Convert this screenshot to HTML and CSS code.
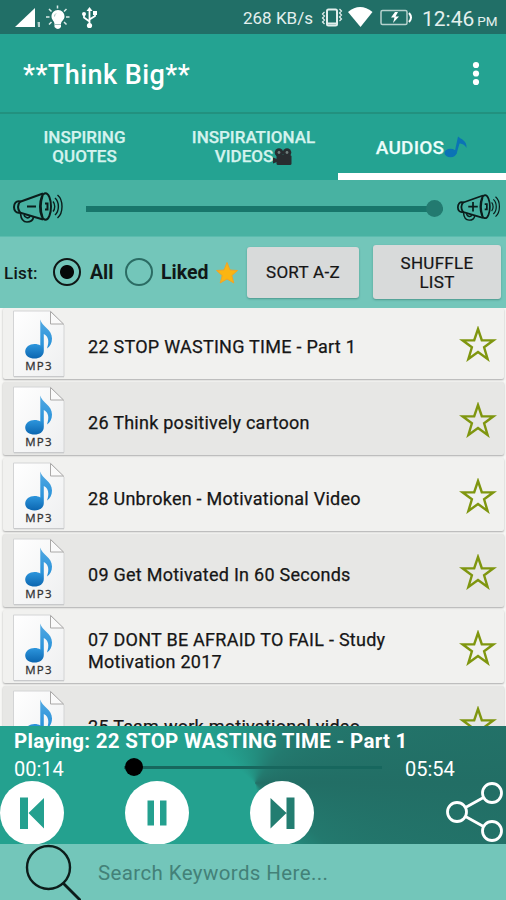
FILE: index.html
```html
<!DOCTYPE html>
<html lang="en">
<head>
<meta charset="utf-8">
<title>Think Big</title>
<link rel="stylesheet" href="styles.css">
</head>
<body>
<svg class="defs" aria-hidden="true">
  <defs>
    <linearGradient id="paper" x1="0" y1="0" x2="1" y2="1"><stop offset="0" stop-color="#fff"/><stop offset="1" stop-color="#eeeff0"/></linearGradient>
    <linearGradient id="blue" x1="0" y1="0" x2="0" y2="1"><stop offset="0" stop-color="#52a9e2"/><stop offset=".65" stop-color="#2b93da"/><stop offset="1" stop-color="#0c66b0"/></linearGradient>
  </defs>
  <symbol id="mp3" viewBox="0 0 54 68">
    <path d="M1.5 1H38.500L52 15V66.500H1.500Z" fill="url(#paper)" stroke="#d3d4d5"/>
    <path d="M2 66.800H52" stroke="#c4c5c6"/>
    <path d="M38.500 1.500V14H51.500Z" fill="#fafafa" stroke="#aaa9a8"/>
    <path d="M28.300 9.500C30 17 40 19 40 28.500C40 33 38 36.500 35 38.500C37.500 31 36.500 26.500 31.800 24V41C31.800 46 27.500 48.500 22.500 48.500C17.500 48.500 13.200 46 13.200 41.500C13.200 37 17.500 34 22.500 34C25 34 27 34.500 28.300 35.500Z" fill="url(#blue)"/>
  </symbol>
  <symbol id="star" viewBox="0 0 38 36">
    <path d="M19 3L22.800 14.200L34.500 14.300L25.100 21.300L28.600 33L19 26L9.400 33L12.900 21.300L3.500 14.300L15.200 14.200Z" fill="none" stroke="#7f960f" stroke-width="2.400"/>
  </symbol>
  <symbol id="horn" viewBox="0 0 52 34">
    <g fill="none" stroke="#0b1d1b" stroke-width="2">
      <path d="M6.500 11L30 2.500M6.500 21.500L30 28.500"/>
      <path d="M7 10.500C3 9.500 1 12.500 1 16S3 22.500 7 21.500C4.500 18 4.500 14 7 10.500Z"/>
      <ellipse cx="32.500" cy="15.500" rx="5.500" ry="13.300"/>
      <path d="M29.500 5C27.500 11 27.500 20 29.500 26M32 12.500H34.500V18.500H32"/>
      <path d="M7.500 22.500C8 28 10.500 31 14 31S20 29 20.500 26M11 24C12 27 16 28 17 25" stroke-width="1.700"/>
      <path d="M40 10.500C42.300 13 42.300 18 40 20.500M42 7C46.500 11 46.500 20 42 24M44.500 4C50.500 9 50.500 22 44.500 27" stroke-width="1.400"/>
    </g>
  </symbol>
</svg>
<div class="screen">
  <header class="status">
    <svg class="status-left" viewBox="0 0 100 34">
      <path d="M15 27L35 8V27Z" fill="#fff"/><path d="M37.500 22H40V27H38" fill="#b5d2ce"/>
      <g stroke="#dcebe9" stroke-width="1.500"><path d="M57.500 5.500V8.500M49 9L51.500 11.500M66.500 9L64 11.500M46 17H49.500M66 17H69.500M49 24.500L51.500 22M66.500 24.500L64 22"/></g>
      <path d="M58 10C54 10 51.500 13 51.500 16.500C51.500 20 54.500 21 54.500 24V27Q58 31 61 27V24C61 21 64.500 20 64.500 16.500C64.500 13 62 10 58 10Z" fill="#fff"/>
      <path d="M56 13.500Q54.500 14.500 54.500 16.500M55 24.500H61" stroke="#9fbfbb" fill="none"/>
      <g fill="none" stroke="#fff" stroke-width="1.800"><path d="M89.500 9V25M84 14V17.500L89.500 21.500M95 13V16L89.500 19.500"/></g>
      <path d="M86.500 11L89.500 7L92.500 11Z" fill="#fff"/><circle cx="89.500" cy="25.500" r="2.600" fill="#fff"/><circle cx="84" cy="14" r="2" fill="#fff"/><path d="M93 11H97V15H93Z" fill="#fff"/>
    </svg>
    <span class="speed">268 KB/s</span>
    <svg class="status-right" viewBox="320 0 94 34">
      <g fill="none" stroke="#e3efed"><rect x="327" y="9.500" width="10" height="16" rx="1.500" stroke-width="2"/><path d="M327 23.500H337" stroke-width="2"/><path d="M324.500 12L322.500 14L324.500 16L322.500 18L324.500 20L322.500 22L324.500 24M339.500 9L341.500 11L339.500 13L341.500 15L339.500 17L341.500 19L339.500 21" stroke-width="1.200"/></g>
      <path d="M348 12Q360 2 372.500 12L360.500 27Z" fill="#fff"/>
      <rect x="381" y="10.500" width="26" height="14" rx="1.500" fill="none" stroke="#b6d2ce" stroke-width="1.500"/><path d="M409 13Q413 17.500 409 22" fill="none" stroke="#fff" stroke-width="2"/>
      <path d="M395 12L391 17.500H394.500L393 23L399 16.500H395.500L398 12Z" fill="#fff"/>
    </svg>
    <span class="clock">12:46<small>PM</small></span>
  </header>
  <div class="appbar">
    <h1>**Think Big**</h1>
    <svg class="more" viewBox="0 0 8 26"><g fill="#fff"><circle cx="4" cy="4" r="3.100"/><circle cx="4" cy="12.500" r="3.100"/><circle cx="4" cy="21" r="3.100"/></g></svg>
  </div>
  <nav class="tabs">
    <div class="tab"><span>INSPIRING<br>QUOTES</span></div>
    <div class="tab"><span>INSPIRATIONAL<br><i class="line">VIDEOS<svg class="camera" viewBox="0 0 19 18"><g fill="#282d30"><circle cx="6" cy="4.500" r="4.300"/><circle cx="14" cy="4.500" r="4.300"/><rect x="3.500" y="7" width="15" height="10" rx="1.500"/><path d="M0 9.500L4 11V14L0 15.500Z"/></g><g fill="#71807e"><circle cx="6" cy="4.500" r="1.400"/><circle cx="14" cy="4.500" r="1.400"/></g></svg></i></span></div>
    <div class="tab active"><i class="line">AUDIOS<svg class="note" viewBox="0 0 24 24"><ellipse cx="6.500" cy="18" rx="6" ry="4.200" fill="#0b73b5"/><path d="M10.500 18L14 1.500C17 4.500 23 5 22.500 13C20 8.500 17.500 9 15.500 8.500L12.500 19Z" fill="#0b73b5"/></svg></i></div>
  </nav>
  <section class="volume">
    <svg class="horn-min" viewBox="0 0 52 34"><use href="#horn"/><path d="M14 15.500H23" stroke="#0b1d1b" stroke-width="2"/></svg>
    <div class="volume-track"><div class="volume-knob"></div></div>
    <svg class="horn-max" viewBox="0 0 52 34"><use href="#horn"/><path d="M13 15.500H24M18.500 10V21" stroke="#0b1d1b" stroke-width="2"/></svg>
  </section>
  <section class="filters">
    <span class="list-label">List:</span>
    <span class="radio on"></span><b class="all">All</b>
    <span class="radio"></span><b class="liked">Liked</b>
    <svg class="gold" viewBox="0 0 22 22"><path d="M11 .5L14 8L21.500 8.500L15.800 13.500L17.800 21L11 17L4.200 21L6.200 13.500L.5 8.500L8 8Z" fill="#fbb512" stroke="#eea52a"/></svg>
    <button class="sort">SORT A-Z</button>
    <button class="shuffle">SHUFFLE<br>LIST</button>
  </section>
  <main class="list">
    <article class="row"><div class="file"><svg viewBox="0 0 54 68"><use href="#mp3"/></svg><em>MP3</em></div><p>22 STOP WASTING TIME - Part 1</p><svg class="star"><use href="#star"/></svg></article>
    <article class="row alt"><div class="file"><svg viewBox="0 0 54 68"><use href="#mp3"/></svg><em>MP3</em></div><p>26 Think positively cartoon</p><svg class="star"><use href="#star"/></svg></article>
    <article class="row"><div class="file"><svg viewBox="0 0 54 68"><use href="#mp3"/></svg><em>MP3</em></div><p>28 Unbroken - Motivational Video</p><svg class="star"><use href="#star"/></svg></article>
    <article class="row alt"><div class="file"><svg viewBox="0 0 54 68"><use href="#mp3"/></svg><em>MP3</em></div><p>09 Get Motivated In 60 Seconds</p><svg class="star"><use href="#star"/></svg></article>
    <article class="row"><div class="file"><svg viewBox="0 0 54 68"><use href="#mp3"/></svg><em>MP3</em></div><p>07 DONT BE AFRAID TO FAIL - Study<br>Motivation 2017</p><svg class="star"><use href="#star"/></svg></article>
    <article class="row alt"><div class="file"><svg viewBox="0 0 54 68"><use href="#mp3"/></svg></div><p>25 Team work motivational video</p><svg class="star"><use href="#star"/></svg></article>
  </main>
  <section class="player">
    <h2>Playing: 22 STOP WASTING TIME - Part 1</h2>
    <div class="progress"><span class="elapsed">00:14</span><div class="track"><div class="knob"></div></div><span>05:54</span></div>
    <div class="controls">
      <svg class="round" viewBox="0 0 64 64"><circle cx="32" cy="32" r="32" fill="#fff"/><path d="M20 16.500H28V48H20ZM44 17V47.500L28.500 32Z" fill="#24a08f"/></svg>
      <svg class="round" viewBox="0 0 64 64"><circle cx="32" cy="32" r="32" fill="#fff"/><path d="M22.500 19.500H29V44.500H22.500ZM35 19.500H41.500V44.500H35Z" fill="#24a08f"/></svg>
      <svg class="round" viewBox="0 0 64 64"><circle cx="32" cy="32" r="32" fill="#fff"/><path d="M20.500 17V47.500L36.500 32ZM36.500 16.500H44.500V48H36.500Z" fill="#237d71"/></svg>
      <svg class="share" viewBox="0 0 58 62"><g fill="none" stroke="#fff" stroke-width="2.800"><circle cx="11" cy="31" r="9.500"/><circle cx="46" cy="12" r="9.500"/><circle cx="46" cy="50" r="9.500"/><path d="M19.500 26.500L37.500 16.500M19.500 35.500L37.500 45.500"/></g></svg>
    </div>
  </section>
  <footer class="search">
    <svg class="lens" viewBox="0 0 56 56"><circle cx="23.500" cy="23.500" r="21.500" fill="none" stroke="#0d1d1b" stroke-width="2.400"/><path d="M38 39L56 57" stroke="#0d1d1b" stroke-width="2.800"/></svg>
    <span>Search Keywords Here...</span>
  </footer>
</div>
</body>
</html>
```
FILE: styles.css
```css
* { box-sizing: border-box; }
body { margin: 0; font-family: Roboto, "Liberation Sans", sans-serif; }
h1, h2, p { margin: 0; }
svg { display: block; flex: none; }
.defs { position: absolute; width: 0; height: 0; }
.screen { width: 506px; height: 900px; overflow: hidden; display: flex; flex-direction: column; background: #fff; }
.screen > * { flex: none; }

.status { height: 34px; background: #216f67; display: flex; align-items: center; color: #e4f0ee; white-space: nowrap; }
.status-left { width: 100px; height: 34px; }
.speed { margin-left: 143px; width: 77px; font-size: 17px; padding-top: 2px; }
.status-right { width: 94px; height: 34px; }
.clock { margin-left: 8px; font-size: 21px; padding-top: 3px; }
.clock small { font-size: 13.500px; margin-left: 3px; }

.appbar { height: 80px; background: #24a392; border-bottom: 2px solid #22917f; display: flex; align-items: center; padding: 1px 26px 0 23px; }
h1 { flex: 1; font-size: 27px; font-weight: 500; letter-spacing: .45px; color: #fff; padding-top: 2px; }
.more { width: 8px; height: 26px; }

.tabs { height: 66px; background: #24a392; display: grid; grid-template-columns: 169px 169px 168px; }
.tab { display: flex; align-items: center; justify-content: center; text-align: center; font-size: 17px; font-weight: 500; line-height: 19px; color: #d5f3ee; -webkit-text-stroke: .25px #d5f3ee; }
.line { display: flex; align-items: center; justify-content: center; font-style: normal; }
.camera { width: 19px; height: 18px; }
.note { width: 24px; height: 24px; }
.tab.active { color: #f0fffc; font-size: 19px; letter-spacing: .2px; padding-top: 7px; border-bottom: 7px solid #fff; }

.volume { height: 56px; background: #48b2a2; display: flex; align-items: center; }
.horn-min { width: 52px; height: 34px; margin-left: 13px; }
.volume-track { width: 357px; height: 6px; margin-left: 21px; margin-top: 1px; background: #18766b; display: flex; align-items: center; justify-content: flex-end; border-radius: 0 8px 8px 0; }
.volume-knob { width: 17px; height: 17px; border-radius: 50%; background: #237a70; }
.horn-max { width: 45px; height: 30px; margin-left: 14px; }

.filters { height: 72px; background: #73c6ba; display: flex; align-items: center; border-top: 1px solid #5bbcae; color: #101817; }
.list-label { width: 48px; padding-left: 4px; font-size: 17px; font-weight: 500; letter-spacing: .3px; }
.radio { width: 28px; height: 28px; margin: -2px 0 0 5px; border: 2.500px solid #2b6c64; border-radius: 50%; }
.radio.on { border-color: #101716; background: radial-gradient(circle, #050808 6.500px, transparent 7.500px); }
.all, .liked { font-size: 19.500px; font-weight: 700; }
.all { width: 30px; margin-left: 9px; }
.liked { width: 54px; margin-left: 8px; }
.gold { width: 22px; height: 22px; margin-left: 1px; }
button { font: 400 17px/19px Roboto, "Liberation Sans", sans-serif; letter-spacing: .3px; color: #151515; background: #d8dada; border: 0; border-radius: 3px; box-shadow: 0 1px 2px #34796f99; padding: 0; -webkit-text-stroke: .2px #151515; }
.sort { width: 112px; height: 51px; margin-left: 9px; margin-top: -1px; }
.shuffle { width: 128px; height: 54px; margin-left: 14px; padding-top: 1px; margin-top: -1px; }

.list { height: 418px; overflow: hidden; background: #f7f7f5; }
.row { height: 73px; margin: 0 2px 3px 3px; background: #f1f1ef; border-radius: 2px; box-shadow: 0 1px 2px #aaa; display: flex; align-items: center; }
.row:first-child { height: 71px; }
.row:first-child > * { margin-top: -2px; }
.row.alt { background: #e7e7e5; }
.file { width: 54px; height: 68px; margin-left: 9px; display: grid; position: relative; top: 1px; }
.file > * { grid-area: 1 / 1; }
.file svg { width: 54px; height: 68px; }
.file em { align-self: end; justify-self: center; z-index: 1; margin-bottom: 5px; font: 400 11.500px/14px "Open Sans", sans-serif; letter-spacing: 1.300px; color: #333; -webkit-text-stroke: .3px #333; }
.row p { flex: 1; margin-left: 22px; padding-top: 8px; font-size: 18px; letter-spacing: .26px; line-height: 22px; color: #161616; -webkit-text-stroke: .25px #161616; white-space: nowrap; }
.star { width: 38px; height: 36px; margin-right: 7px; position: relative; top: 1px; }

.player { height: 118px; background: conic-gradient(from 0deg at 255px 57px, #238e7f 0deg, #237a6f 40deg, #226e65 90deg, #23796e 130deg, #24a18f 170deg 310deg, #238e7f 360deg); color: #fff; }
h2 { height: 30px; padding-left: 14px; font-size: 20.500px; font-weight: 700; letter-spacing: .27px; line-height: 31px; white-space: nowrap; }
.progress { height: 25px; display: flex; align-items: center; font-size: 20px; }
.progress span { line-height: 24px; }
.elapsed { width: 124px; padding-left: 14px; }
.track { width: 258px; height: 3px; margin-right: 23px; margin-top: -3px; background: #17675e; display: flex; align-items: center; }
.knob { width: 18px; height: 18px; margin-left: 1px; background: #000; border-radius: 50%; }
.controls { display: flex; }
.round { width: 64px; height: 64px; margin-right: 61px; }
.share { width: 58px; height: 62px; margin-left: 71px; }

.search { height: 56px; background: #73c6ba; display: flex; align-items: center; }
.lens { width: 56px; height: 56px; margin-left: 25px; }
.search span { margin-left: 17px; padding-top: 2px; font-size: 20.500px; letter-spacing: .38px; color: #438178; }
```
